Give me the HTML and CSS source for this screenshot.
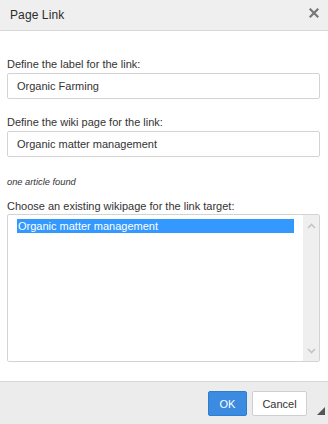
FILE: index.html
```html
<!DOCTYPE html>
<html lang="en">
<head>
    <meta charset="UTF-8">
    <meta name="viewport" content="width=device-width, initial-scale=1.0">
    <title>Page Link</title>
    <link rel="stylesheet" href="styles.css">
</head>
<body>
    <div class="dialog">
        <div class="dialog-header">
            <h2>Page Link</h2>
            <button class="close-btn" title="Close">
                <svg width="10" height="10" viewBox="0 0 10 10">
                    <path d="M1.5 1.5 L8.5 8.5 M8.5 1.5 L1.5 8.5" stroke="#777" stroke-width="2.2" stroke-linecap="square"/>
                </svg>
            </button>
        </div>

        <div class="dialog-body">
            <div class="field">
                <label for="linkLabel">Define the label for the link:</label>
                <input type="text" id="linkLabel" value="Organic Farming">
            </div>

            <div class="field">
                <label for="wikiPage">Define the wiki page for the link:</label>
                <input type="text" id="wikiPage" value="Organic matter management">
            </div>

            <p class="result-count">one article found</p>

            <div class="field field-list">
                <label>Choose an existing wikipage for the link target:</label>
                <div class="listbox">
                    <ul class="list-items">
                        <li class="selected">Organic matter management</li>
                    </ul>
                    <!-- fake scrollbar, like the old select box -->
                    <div class="scrollbar">
                        <svg width="9" height="6" viewBox="0 0 9 6"><path d="M1 5 L4.5 1.5 L8 5" fill="none" stroke="#c4c4c4" stroke-width="1.6"/></svg>
                        <svg width="9" height="6" viewBox="0 0 9 6"><path d="M1 1 L4.5 4.5 L8 1" fill="none" stroke="#c4c4c4" stroke-width="1.6"/></svg>
                    </div>
                </div>
            </div>
        </div>

        <div class="dialog-footer">
            <button class="btn btn-ok">OK</button>
            <button class="btn btn-cancel">Cancel</button>
            <span class="resize-handle"></span>
        </div>
    </div>
</body>
</html>
```

FILE: styles.css
```css
* {
    box-sizing: border-box;
}

body {
    margin: 0;
    font-family: 'Liberation Sans', Arial, sans-serif;
    color: #333;
    background: #fff;
}

.dialog {
    width: 328px;
    height: 424px;
    display: flex;
    flex-direction: column;
    background: #fff;
    position: relative;
}

.dialog-header {
    height: 31px;
    background: #efefef;
    border-bottom: 1px solid #d8d8d8;
    display: flex;
    align-items: center;
    justify-content: space-between;
    padding: 0 9px 0 10px;
}

h2 {
    margin: 0;
    font-size: 12px;
    font-weight: normal;
    color: #2b2b2b;
    letter-spacing: 0.1px;
}

.close-btn {
    border: none;
    background: none;
    padding: 0;
    width: 10px;
    height: 10px;
    margin-top: -4px;
    cursor: pointer;
    display: flex;
}

.dialog-body {
    flex: 1;
    padding: 25px 8px 0 7px;
}

.field {
    display: flex;
    flex-direction: column;
    margin-bottom: 15px;
}

.field label {
    font-size: 11px;
    line-height: 16px;
    color: #333;
    margin-bottom: 1px;
}

.field input {
    height: 26px;
    border: 1px solid #d3d3d3;
    border-radius: 2px;
    padding: 0 9px;
    font-family: inherit;
    font-size: 11px;
    color: #333;
    outline: none;
}

.result-count {
    margin: 19px 0 10px 0;
    font-size: 9.3px;
    line-height: 12px;
    font-style: italic;
    color: #333;
}

.field-list label {
    margin-bottom: 0;
}

.listbox {
    height: 148px;
    border: 1px solid #d3d3d3;
    border-radius: 2px;
    display: flex;
    overflow: hidden;
}

.list-items {
    flex: 1;
    list-style: none;
    margin: 0;
    padding: 4px 9px 0 9px;
}

.list-items li {
    font-size: 11px;
    line-height: 14px;
    height: 14px;
    padding-left: 1px;
}

.list-items li.selected {
    background: #3399ff;
    color: #fff;
}

.scrollbar {
    width: 16px;
    background: #efefef;
    display: flex;
    flex-direction: column;
    justify-content: space-between;
    align-items: center;
    padding: 8px 0 7px 0;
}

.dialog-footer {
    height: 43px;
    background: #ececec;
    border-top: 1px solid #d8d8d8;
    display: flex;
    justify-content: flex-end;
    align-items: flex-start;
    gap: 5px;
    padding: 9px 21px 0 0;
    position: relative;
}

.btn {
    height: 25px;
    border-radius: 2px;
    font-family: inherit;
    font-size: 11px;
    cursor: pointer;
    padding: 0;
}

.btn-ok {
    width: 39px;
    background: #3b8be0;
    border: 1px solid #2f7dd1;
    color: #fff;
}

.btn-cancel {
    width: 55px;
    background: #fff;
    border: 1px solid #cfcfcf;
    color: #333;
}

.resize-handle {
    position: absolute;
    right: 3px;
    bottom: 9px;
    width: 0;
    height: 0;
    border-left: 8px solid transparent;
    border-bottom: 8px solid #555;
}
```
